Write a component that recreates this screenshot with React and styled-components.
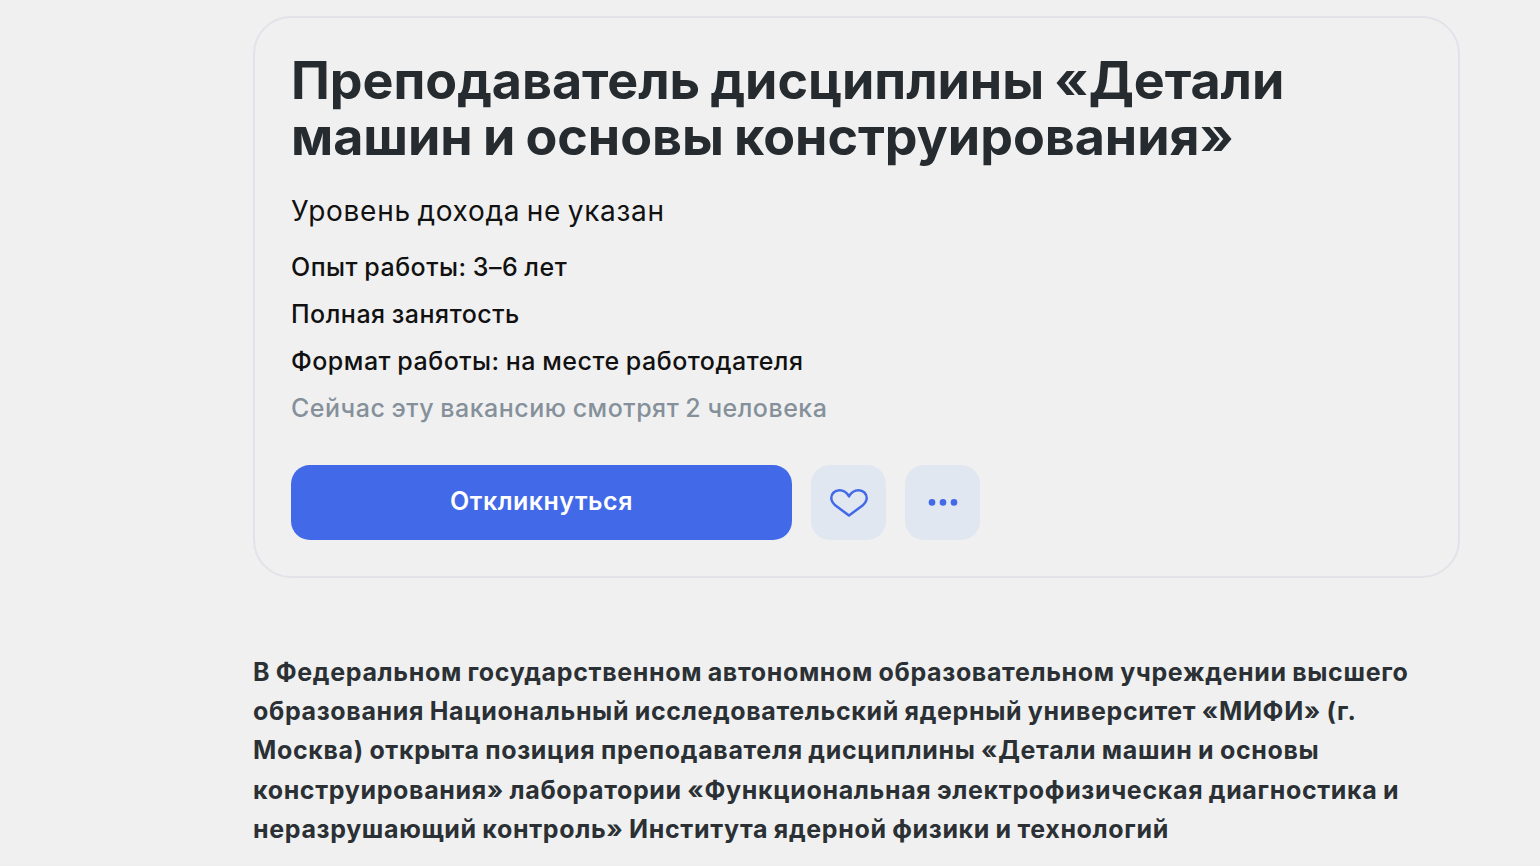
import React from "react";
import styled, { createGlobalStyle } from "styled-components";

const GlobalStyle = createGlobalStyle`
  html, body {
    margin: 0;
    height: 866px;
    overflow: hidden;
    background: #f0f0f0;
    font-family: Inter, "Noto Sans", sans-serif;
  }
`;

const Page = styled.main`
  width: 1207px;
  margin-left: 253px;
  padding-top: 16px;
`;

const Card = styled.section`
  box-sizing: border-box;
  height: 562px;
  padding: 35px 36px;
  border: 2px solid #e1e3e9;
  border-radius: 38px;
`;

const Title = styled.h1`
  margin: 0 0 27px;
  font-size: 52px;
  line-height: 56px;
  font-weight: 750;
  letter-spacing: -0.05px;
  word-spacing: -2px;
  color: #262b30;
`;

const Salary = styled.p`
  margin: 0 0 14px;
  font-size: 28px;
  line-height: 38px;
  letter-spacing: 0.72px;
  word-spacing: -2px;
  color: #111;
`;

const Fact = styled.p`
  margin: 0;
  font-size: 25px;
  line-height: 47px;
  letter-spacing: 0.5px;
  word-spacing: -1px;
  font-weight: 450;
  color: ${(p) => (p.$muted ? "#85909b" : "#111")};
`;

const Actions = styled.div`
  display: flex;
  gap: 19px;
  margin-top: 33px;
`;

const ApplyButton = styled.button`
  width: 501px;
  height: 75px;
  padding: 0 0 3px;
  border: 0;
  border-radius: 19px;
  background: #4169e8;
  color: #fff;
  font: 600 25px Inter, sans-serif;
  letter-spacing: 0.5px;
`;

const IconButton = styled.button`
  display: flex;
  align-items: center;
  justify-content: center;
  width: 75px;
  height: 75px;
  padding: 0;
  border: 0;
  border-radius: 19px;
  background: #e1e7f0;
`;

const Description = styled.p`
  margin: 75px 0 0;
  font-size: 25px;
  line-height: 39.2px;
  font-weight: 700;
  letter-spacing: 0.65px;
  word-spacing: -1px;
  color: #2b3035;
`;

const HeartIcon = () => (
  <svg width="38" height="28" viewBox="0 0 38 28" fill="none">
    <path
      d="M19 26.5 L5.5 16.5 C2.6 14 1.3 11.6 1.3 9 C1.3 4.6 4.8 1.3 9.4 1.3 C13.4 1.3 16.6 3.2 19 7.4 C21.4 3.2 24.6 1.3 28.6 1.3 C33.2 1.3 36.7 4.6 36.7 9 C36.7 11.6 35.4 14 32.5 16.5 Z"
      stroke="#4169e8"
      strokeWidth="2.5"
      strokeLinejoin="round"
    />
  </svg>
);

const DotsIcon = () => (
  <svg width="30" height="8" viewBox="0 0 30 8" fill="#4169e8">
    <circle cx="4" cy="3.4" r="3.3" />
    <circle cx="15" cy="3.4" r="3.3" />
    <circle cx="26" cy="3.4" r="3.3" />
  </svg>
);

const App = () => (
  <>
    <GlobalStyle />
    <Page>
      <Card>
        <Title>
          Преподаватель дисциплины «Детали машин и основы конструирования»
        </Title>
        <Salary>Уровень дохода не указан</Salary>
        <Fact>Опыт работы: 3–6 лет</Fact>
        <Fact>Полная занятость</Fact>
        <Fact>Формат работы: на месте работодателя</Fact>
        <Fact $muted>Сейчас эту вакансию смотрят 2 человека</Fact>
        <Actions>
          <ApplyButton>Откликнуться</ApplyButton>
          <IconButton aria-label="В избранное">
            <HeartIcon />
          </IconButton>
          <IconButton aria-label="Ещё">
            <DotsIcon />
          </IconButton>
        </Actions>
      </Card>
      <Description>
        В Федеральном государственном автономном образовательном учреждении
        высшего образования Национальный исследовательский ядерный университет
        «МИФИ» (г. Москва) открыта позиция преподавателя дисциплины «Детали
        машин и основы конструирования» лаборатории «Функциональная
        электрофизическая диагностика и неразрушающий контроль» Института
        ядерной физики и технологий
      </Description>
    </Page>
  </>
);

export default App;
